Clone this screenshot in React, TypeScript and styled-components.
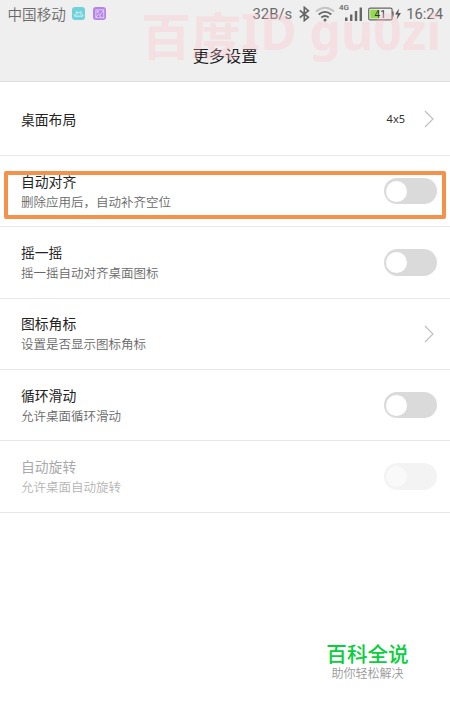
import React from 'react';
import styled, { createGlobalStyle } from 'styled-components';

const GlobalStyle = createGlobalStyle`
  * { box-sizing: border-box; }
  body {
    margin: 0;
    background: #fff;
    font-family: Roboto, "Noto Sans CJK SC", sans-serif;
  }
`;

const Screen = styled.div`
  position: relative;
  display: flex;
  flex-direction: column;
  width: 450px;
  height: 711px;
  overflow: hidden;
  background: #fff;
`;

const Header = styled.header`
  height: 82px;
  background: #efefef;
  border-bottom: 1px solid #e0e0e0;
`;

const StatusBar = styled.div`
  display: flex;
  align-items: center;
  justify-content: space-between;
  height: 28px;
  padding: 0 7px 0 7.5px;
  color: #6a6a6a;
`;

const Cluster = styled.div`
  display: flex;
  align-items: center;
`;

const Carrier = styled.span`
  font: 350 14.6px/28px "Noto Sans CJK SC", sans-serif;
  margin-right: 6px;
`;

const AppBadge = styled.span<{ $color: string }>`
  display: flex;
  width: 13.5px;
  height: 13.5px;
  margin: -1px 7.5px 0 0;
  border-radius: 3px;
  background: ${p => p.$color};
`;

const StatusText = styled.span<{ $gap?: number }>`
  margin-left: ${p => p.$gap ?? 0}px;
  font-size: 14.8px;
  line-height: 28px;
  white-space: nowrap;
`;

const StatusIcon = styled.svg<{ $gap: number }>`
  display: block;
  margin-left: ${p => p.$gap}px;
`;

const Title = styled.h1`
  margin: 10px 0 0;
  text-align: center;
  font: 400 16.2px/34px "Noto Sans CJK SC", sans-serif;
  color: #1c1c1c;
`;

const Watermark = styled.div`
  position: absolute;
  top: -2px;
  left: 141px;
  display: flex;
  height: 70px;
  font: 700 50px/70px "Noto Sans CJK SC", sans-serif;
  color: rgba(255, 190, 198, 0.3);
  white-space: pre;
  pointer-events: none;
`;

const WatermarkLatin = styled.span`
  margin-top: -2px;
  font-family: "Noto Sans", sans-serif;
  font-size: 49.7px;
`;

const List = styled.main`
  display: flex;
  flex-direction: column;
`;

const Row = styled.section<{ $height: number; $disabled?: boolean }>`
  display: flex;
  align-items: center;
  justify-content: space-between;
  height: ${p => p.$height}px;
  padding: 0 13px 0 21px;
  border-bottom: 1px solid #e8e8e8;
  color: ${p => (p.$disabled ? '#aaa' : '#222')};
`;

const Label = styled.div`
  font: 400 13.8px/20px "Noto Sans CJK SC", sans-serif;
`;

const Hint = styled.div<{ $disabled?: boolean }>`
  margin-top: 1px;
  font: 350 12.5px/20px "Noto Sans CJK SC", sans-serif;
  color: ${p => (p.$disabled ? '#b4b4b4' : '#686868')};
`;

const Value = styled.span`
  font: 400 11px/20px "Noto Sans", sans-serif;
  color: #333;
  margin-right: 18.5px;
`;

const Arrow = styled.svg`
  display: block;
  margin-right: 3.5px;
`;

const Switch = styled.span<{ $disabled?: boolean }>`
  display: flex;
  align-items: center;
  width: 53.5px;
  height: 26.5px;
  padding-left: 2.5px;
  border-radius: 14px;
  background: ${p => (p.$disabled ? '#f3f3f3' : '#dadada')};
  &::before {
    content: '';
    width: 21px;
    height: 21px;
    border-radius: 50%;
    background: ${p => (p.$disabled ? '#f9f9f9' : '#fff')};
  }
`;

const Highlight = styled.div`
  position: absolute;
  left: 4px;
  top: 171px;
  width: 442px;
  height: 48px;
  border: 4px solid #f5924a;
  border-radius: 2px;
`;

const Brand = styled.aside`
  position: absolute;
  left: 307px;
  top: 640px;
  width: 121px;
  text-align: center;
`;

const BrandName = styled.div`
  font: 500 20.6px/26px "Noto Sans CJK SC", sans-serif;
  color: #08cf3c;
`;

const Slogan = styled.div`
  font: 350 12px/14px "Noto Sans CJK SC", sans-serif;
  color: #999;
`;

interface Setting {
  label: string;
  hint?: string;
  value?: string;
  kind: 'link' | 'switch';
  height: number;
  disabled?: boolean;
}

const settings: Setting[] = [
  { label: '桌面布局', value: '4x5', kind: 'link', height: 74 },
  { label: '自动对齐', hint: '删除应用后，自动补齐空位', kind: 'switch', height: 71.4 },
  { label: '摇一摇', hint: '摇一摇自动对齐桌面图标', kind: 'switch', height: 71.3 },
  { label: '图标角标', hint: '设置是否显示图标角标', kind: 'link', height: 71.3 },
  { label: '循环滑动', hint: '允许桌面循环滑动', kind: 'switch', height: 71.3 },
  { label: '自动旋转', hint: '允许桌面自动旋转', kind: 'switch', height: 71.3, disabled: true },
];

const Chevron = () => (
  <Arrow width="10" height="18" viewBox="0 0 10 18" fill="none" stroke="#bdbdbd" strokeWidth="1.1">
    <path d="M1 1l8 8-8 8" />
  </Arrow>
);

const StatusIcons = () => (
  <>
    <StatusIcon $gap={7} width="11" height="16" viewBox="0 0 11 16" fill="none" stroke="#666" strokeWidth="1.6">
      <path d="M.8 4.4l8.6 6.9-4.1 3.4V1.3l4.1 3.4-8.6 6.9" />
    </StatusIcon>
    <StatusIcon $gap={5} width="20" height="16" viewBox="0 0 20 16" fill="none" strokeWidth="1.8">
      <path d="M1 5.5Q10-2 19 5.5" stroke="#c4c4c4" />
      <path d="M3.7 8.5Q10 3.3 16.3 8.5M6.3 11.5Q10 8.5 13.7 11.5" stroke="#666" />
      <circle cx="10" cy="14" r="1.5" fill="#666" />
    </StatusIcon>
    <StatusIcon $gap={4} width="24" height="22" viewBox="0 0 24 22" fill="#666">
      <text x="0" y="7" fontSize="8" fontWeight="500" fontFamily="Roboto, sans-serif">4G</text>
      <path d="M6 14.5h2.5v3.5H6zM11 11.5h2.4v6.5H11zM15.8 8h2.4v10h-2.4zM20.6 4.5H23v13.5h-2.4z" />
    </StatusIcon>
    <StatusIcon $gap={5} width="33" height="14" viewBox="0 0 33 14">
      <rect x=".7" y="1.2" width="23.4" height="11.7" rx="1.5" fill="#efefef" stroke="#666" strokeWidth="1.2" />
      <path d="M2.2 2.7h9v8.7h-9z" fill="#92dc49" />
      <path d="M25 4.5v5" stroke="#666" strokeWidth="1.4" />
      <text x="12.2" y="10.8" textAnchor="middle" fontSize="10" fontFamily="Roboto, sans-serif" fill="#333">41</text>
      <path d="M31 1.5l-4 6h2.7l-1 5 4.3-6.5h-2.8z" fill="#555" />
    </StatusIcon>
  </>
);

export default function App() {
  return (
    <Screen>
      <GlobalStyle />
      <Header>
        <StatusBar>
          <Cluster>
            <Carrier>中国移动</Carrier>
            <AppBadge $color="#70d3dc">
              <svg width="13.5" height="13.5" viewBox="0 0 14 14" fill="none" stroke="#e2f8fa" strokeWidth=".9">
                <path d="M2.7 9.5c0-5 8.6-5 8.6 0zM4.5 4.2l.8 1.6M9.5 4.2l-.8 1.6M5 8h.8M8.3 8h.8" />
              </svg>
            </AppBadge>
            <AppBadge $color="#b583e6">
              <svg width="13.5" height="13.5" viewBox="0 0 14 14" fill="none" stroke="#ead9f8" strokeWidth=".9">
                <rect x="3" y="3" width="8.2" height="8.2" />
                <path d="M3 10.5l3-3 1.7.4L11 3.5M7 8.5l1.5 2.5" />
                <circle cx="5" cy="5" r=".8" />
              </svg>
            </AppBadge>
          </Cluster>
          <Cluster>
            <StatusText>32B/s</StatusText>
            <StatusIcons />
            <StatusText $gap={5}>16:24</StatusText>
          </Cluster>
        </StatusBar>
        <Title>更多设置</Title>
      </Header>
      <List>
        {settings.map(s => (
          <Row key={s.label} $height={s.height} $disabled={s.disabled}>
            <div>
              <Label>{s.label}</Label>
              {s.hint && <Hint $disabled={s.disabled}>{s.hint}</Hint>}
            </div>
            {s.kind === 'switch' ? (
              <Switch $disabled={s.disabled} />
            ) : (
              <Cluster>
                {s.value && <Value>{s.value}</Value>}
                <Chevron />
              </Cluster>
            )}
          </Row>
        ))}
      </List>
      <Watermark>
        百度<WatermarkLatin>ID gu0zi</WatermarkLatin>
      </Watermark>
      <Highlight />
      <Brand>
        <BrandName>百科全说</BrandName>
        <Slogan>助你轻松解决</Slogan>
      </Brand>
    </Screen>
  );
}
